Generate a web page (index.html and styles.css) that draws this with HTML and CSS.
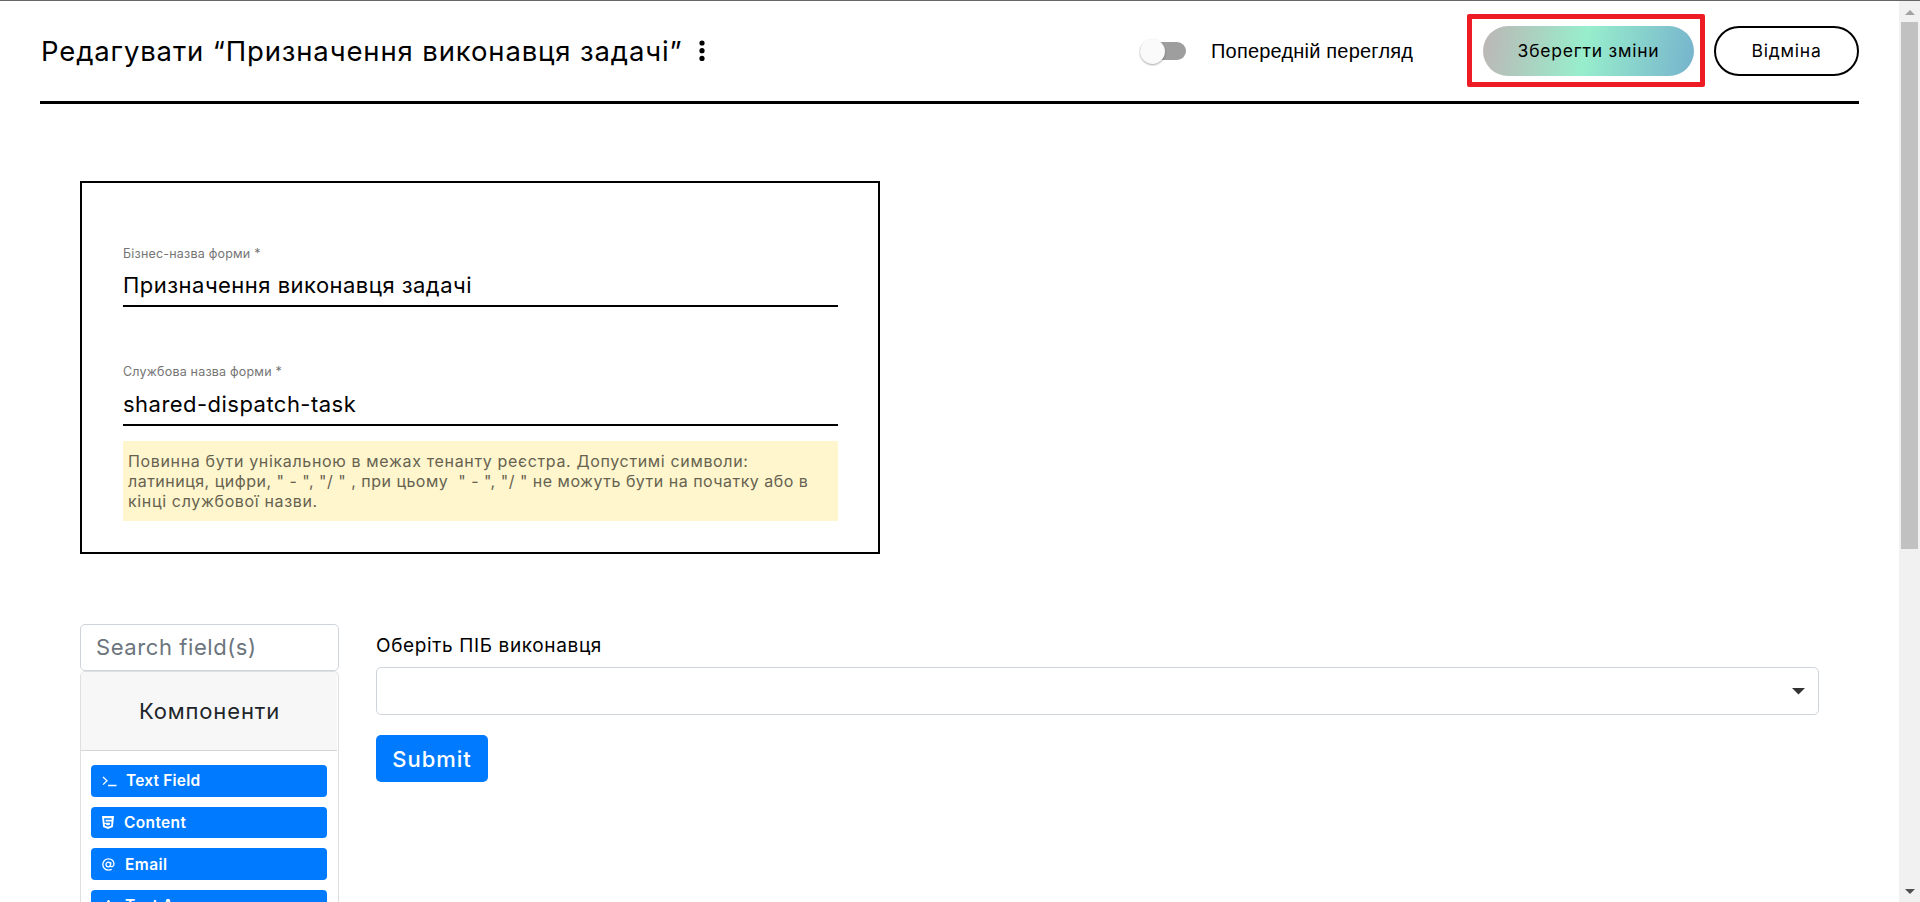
FILE: index.html
```html
<!DOCTYPE html>
<html lang="uk">
<head>
<meta charset="utf-8">
<title>Редагувати форму</title>
<link rel="stylesheet" href="styles.css">
</head>
<body>
<div class="window">
  <main class="page">
    <header class="header">
      <h1 class="title">Редагувати “Призначення виконавця задачі”</h1>
      <svg class="dots" width="6" height="22" viewBox="0 0 6 22"><circle cx="3" cy="3" r="2.6"/><circle cx="3" cy="10.7" r="2.6"/><circle cx="3" cy="18.4" r="2.6"/></svg>
      <div class="toggle"><span class="thumb"></span></div>
      <span class="preview">Попередній перегляд</span>
      <div class="save-frame"><button class="btn save">Зберегти зміни</button></div>
      <button class="btn cancel">Відміна</button>
    </header>
    <section class="card">
      <div class="field">
        <label class="caption">Бізнес-назва форми *</label>
        <div class="value">Призначення виконавця задачі</div>
      </div>
      <div class="field second">
        <label class="caption">Службова назва форми *</label>
        <div class="value">shared-dispatch-task</div>
      </div>
      <p class="hint">Повинна бути унікальною в межах тенанту реєстра. Допустимі символи:<br><span class="symbols">латиниця, цифри, " - ", "/ " , при цьому&nbsp; " - ", "/ " не можуть бути на початку або в</span><br>кінці службової назви.</p>
    </section>
    <section class="builder">
      <aside class="sidebar">
        <div class="search">Search field(s)</div>
        <div class="palette">
          <div class="palette-head">Компоненти</div>
          <div class="palette-list">
            <div class="item"><svg class="ic-term" width="15" height="12" viewBox="0 0 15 12"><path d="M1 2l4 3.8-4 3.8M6 10.500h8.500"/></svg>Text Field</div>
            <div class="item content"><svg width="12" height="13" viewBox="0 0 12 13"><path class="f" d="M0 0h12l-1.100 11L6 13l-4.900-2z"/><path class="s" d="M9.600 3H2.800l.3 3.200h5.700l-.3 3L6 10l-2.500-.8-.1-1.200"/></svg>Content</div>
            <div class="item email"><svg width="13" height="13" viewBox="0 0 13 13"><circle cx="6.300" cy="6.500" r="2.300"/><path d="M8.800 4.100l-.4 3.600c0 1.600 3.600 1.300 3.600-1.600C12 3 9.700.8 6.500.8 3.300.8.8 3.300.8 6.500s2.500 5.700 5.700 5.700c1.300 0 2.300-.3 3.200-.9"/></svg>Email</div>
            <div class="item"><svg width="13" height="12" viewBox="0 0 13 12"><path class="bold" d="M2 11L6.500 1 11 11M3.700 7.500h5.600"/></svg>Text Area</div>
          </div>
        </div>
      </aside>
      <div class="form">
        <label class="form-label">Оберіть ПІБ виконавця</label>
        <div class="select"><svg width="13" height="7" viewBox="0 0 13 7"><path d="M0 0h13L6.500 6.500z"/></svg></div>
        <button class="submit">Submit</button>
      </div>
    </section>
  </main>
  <div class="scrollbar">
    <svg width="10" height="5" viewBox="0 0 10 5"><path fill="#a3a3a3" d="M0 5h10L5 0z"/></svg>
    <div class="bar"></div>
    <svg class="down" width="10" height="5" viewBox="0 0 10 5"><path fill="#505050" d="M0 0h10L5 5z"/></svg>
  </div>
</div>
</body>
</html>
```
FILE: styles.css
```css
* { box-sizing: border-box; }
body { margin: 0; background: #fff; color: #000; font-family: Inter, "Noto Sans", sans-serif; font-size: 20px; }
button { font: inherit; margin: 0; }

.window { display: flex; height: 902px; overflow: hidden; border-top: 1px solid #666; }
.page { width: 1899px; padding: 0 40px; flex: none; }

/* Header */
.header { display: flex; align-items: center; height: 103px; border-bottom: 3px solid #000; }
.title { margin: 0; padding-left: 1px; font-size: 27.5px; letter-spacing: .86px; font-weight: 400; white-space: nowrap; width: 659px; }
.dots { flex: none; }
.toggle { margin-left: 435px; width: 46px; height: 18px; border-radius: 9px; background: #9e9e9e; display: flex; align-items: center; flex: none; }
.thumb { width: 25px; height: 25px; border-radius: 50%; background: #fafafa; box-shadow: 0 1px 2px rgba(0,0,0,.35); flex: none; }
.preview { margin-left: 25px; width: 256px; font-family: "Liberation Sans", Arial, sans-serif; font-size: 20px; letter-spacing: .2px; white-space: nowrap; }
.save-frame { border: 5px solid #ed1c24; border-radius: 2px; width: 238px; height: 73px; margin-top: -2px; padding: 7px 6px 6px 11px; flex: none; }
.btn { height: 50px; border-radius: 25px; font-size: 17.5px; letter-spacing: .78px; padding: 0; white-space: nowrap; color: #000; }
.save { display: block; width: 211px; border: 0; background: linear-gradient(100deg, #bdb5b5 0%, #98eecc 48%, #76b3cd 100%); }
.cancel { margin-left: 9px; width: 145px; border: 2px solid #000; background: #fff; margin-top: -1px; }

/* Form names */
.card { margin: 77px 0 0 40px; width: 800px; height: 373px; border: 2px solid #000; padding: 60px 40px 0 41px; }
.field { height: 64px; border-bottom: 2px solid #000; }
.second { margin-top: 55px; }
.caption { display: block; padding-top: 1px; font-size: 12.5px; letter-spacing: .2px; line-height: 20px; color: #757575; }
.second .caption { padding: 0 0 1px; }
.value { font-size: 22px; letter-spacing: .47px; line-height: 30px; margin-top: 6px; }
.hint { margin: 15px 0 0; height: 80px; padding: 10px 5px; background: #fff6ce; color: #66624f; font-size: 16px; letter-spacing: .65px; line-height: 20px; white-space: nowrap; }
.symbols { letter-spacing: .49px; }

/* Builder */
.builder { display: flex; gap: 37px; margin: 70px 40px 0; }
.sidebar { width: 259px; flex: none; }
.search { height: 47px; border: 1px solid #ced4da; border-radius: 5px; padding-left: 15px; line-height: 45px; color: #6c757d; font-size: 22px; letter-spacing: .58px; }
.palette { border: 1px solid #dfdfdf; border-radius: 5px; height: 400px; overflow: hidden; }
.palette-head { height: 79px; background: #f7f7f7; border-bottom: 1px solid #d5d5d5; text-align: center; line-height: 79px; font-size: 22px; letter-spacing: .85px; color: #212529; margin-right: 1px; padding-left: 1px; }
.palette-list { padding: 14px 11px 0 10px; display: flex; flex-direction: column; gap: 10px; }
.item { height: 31.7px; background: #007bff; border-radius: 4px; color: #fff; font-size: 15.5px; letter-spacing: .2px; font-weight: 600; display: flex; align-items: center; padding-left: 11px; }
.content { letter-spacing: .35px; }
.email { letter-spacing: .45px; }
.item svg { fill: none; stroke: #fff; stroke-width: 1.3; margin-right: 10px; }
.item .ic-term { margin-right: 9px; }
.item .f { fill: #fff; stroke: none; }
.item .s { stroke: #007bff; }
.item .bold { stroke-width: 2; }

.form { flex: 1; padding-top: 7px; }
.form-label { display: block; font-size: 19px; letter-spacing: .63px; line-height: 30px; }
.select { margin-top: 6px; height: 48px; border: 1px solid #ced4da; border-radius: 5px; display: flex; justify-content: flex-end; align-items: center; padding-right: 13px; }
.select svg { fill: #333; }
.submit { margin-top: 20px; width: 112px; height: 47px; border: 0; border-radius: 5px; background: #007bff; color: #fff; font-size: 22px; letter-spacing: 1px; font-weight: 500; padding: 1px 0 0; display: block; }

/* Window scrollbar */
.scrollbar { width: 21px; background: #f1f1f1; display: flex; flex-direction: column; align-items: center; padding: 9px 0 8px; }
.bar { width: 17px; height: 527px; background: #c1c1c1; margin-top: 7px; flex: none; }
.down { margin-top: auto; }
```
